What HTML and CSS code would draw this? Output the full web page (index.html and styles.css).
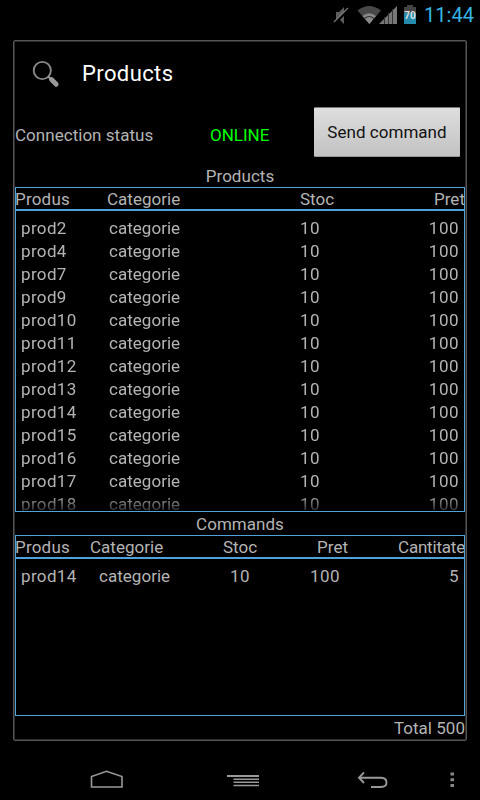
FILE: index.html
```
<!DOCTYPE html>
<html lang="en">
<head>
<meta charset="utf-8">
<title>Products</title>
<link rel="stylesheet" href="styles.css">
</head>
<body>
<header class="statusbar">
  <svg class="status-icons" width="90" height="30" viewBox="0 0 90 30">
    <path d="M6 12h3l5-5v17l-5-5H6z" fill="#5c5c5c"/>
    <path d="M4.500 23.500L18.500 9.500" stroke="#000" stroke-width="2.500"/>
    <path d="M4 22L18 8" stroke="#777" stroke-width="1.300"/>
    <path d="M27.500 10.500Q39 1.500 51 10.500L39.300 24z" fill="#484848"/>
    <path d="M32.500 16Q39 10.500 46 16L39.300 24z" fill="#888"/>
    <path d="M34.500 18.500Q39 14.500 44 18.500" fill="none" stroke="#333" stroke-width="1.2"/>
    <path d="M49 24L67 6V24z" fill="#777"/>
    <path d="M54.500 17v7M58.500 13v11M62.500 9v15" stroke="#333" stroke-width="1"/>
    <path d="M74 7h3V5h6v2h3v6H74z" fill="#444"/>
    <path d="M74 13h12v11H74z" fill="#258bad"/>
    <text x="80" y="19" text-anchor="middle" class="battery">70</text>
  </svg>
  <span class="clock">11:44</span>
</header>
<main class="panel">
  <div class="title">
    <svg width="30" height="30" viewBox="0 0 30 30">
      <circle cx="10.300" cy="11.500" r="8.600" fill="none" stroke="#888" stroke-width="1.900"/>
      <path d="M16.300 17.500l3 3" stroke="#999" stroke-width="2"/>
      <path d="M19.500 20.500l4.700 4.700" stroke="#999" stroke-width="4.800" stroke-linecap="round"/>
    </svg>
    <h1>Products</h1>
  </div>
  <div class="connection">
    <span class="label">Connection status</span>
    <span class="online">ONLINE</span>
    <button class="send">Send command</button>
  </div>
  <h2 class="caption">Products</h2>
  <section class="list products">
    <div class="row head"><span>Produs</span><span>Categorie</span><span>Stoc</span><span>Pret</span></div>
    <div class="body">
      <div class="row"><span>prod2</span><span>categorie</span><span>10</span><span>100</span></div>
      <div class="row"><span>prod4</span><span>categorie</span><span>10</span><span>100</span></div>
      <div class="row"><span>prod7</span><span>categorie</span><span>10</span><span>100</span></div>
      <div class="row"><span>prod9</span><span>categorie</span><span>10</span><span>100</span></div>
      <div class="row"><span>prod10</span><span>categorie</span><span>10</span><span>100</span></div>
      <div class="row"><span>prod11</span><span>categorie</span><span>10</span><span>100</span></div>
      <div class="row"><span>prod12</span><span>categorie</span><span>10</span><span>100</span></div>
      <div class="row"><span>prod13</span><span>categorie</span><span>10</span><span>100</span></div>
      <div class="row"><span>prod14</span><span>categorie</span><span>10</span><span>100</span></div>
      <div class="row"><span>prod15</span><span>categorie</span><span>10</span><span>100</span></div>
      <div class="row"><span>prod16</span><span>categorie</span><span>10</span><span>100</span></div>
      <div class="row"><span>prod17</span><span>categorie</span><span>10</span><span>100</span></div>
      <div class="row"><span>prod18</span><span>categorie</span><span>10</span><span>100</span></div>
    </div>
  </section>
  <h2 class="caption">Commands</h2>
  <section class="list commands">
    <div class="row head"><span>Produs</span><span>Categorie</span><span>Stoc</span><span>Pret</span><span>Cantitate</span></div>
    <div class="body">
      <div class="row"><span>prod14</span><span>categorie</span><span>10</span><span>100</span><span>5</span></div>
    </div>
  </section>
  <div class="total">Total 500</div>
</main>
<nav class="navbar">
  <svg width="480" height="44" viewBox="0 0 480 44" fill="none" stroke="#999">
    <path d="M91.500 31V20.500L106.500 15.300L122 20.500V31z" stroke-width="1.600"/>
    <path d="M227 20h32" stroke-width="2"/>
    <path d="M233.500 23.300H259M233.500 26.300H259M233.500 29.500H259" stroke-width="1.600"/>
    <path d="M364 16.500L359 21.700L364 27M359 21.700H381Q386.500 22 386.500 26.500Q386.500 31 381 31H371" stroke-width="1.900"/>
    <path d="M450.500 16.500h3.500v3h-3.500zM450.500 22.300h3.500v3h-3.500zM450.500 28.100h3.500v3h-3.500z" fill="#888" stroke="none"/>
  </svg>
</nav>
</body>
</html>
```
FILE: styles.css
```
* { box-sizing: border-box; }
body {
  margin: 0;
  width: 480px;
  height: 800px;
  overflow: hidden;
  display: flex;
  flex-direction: column;
  background: #000;
  color: #b4b4b4;
  font: 17px/23px Roboto, sans-serif;
  letter-spacing: 0.03px;
}
.statusbar {
  height: 40px;
  padding-right: 6px;
  display: flex;
  justify-content: flex-end;
  align-items: flex-start;
}
.status-icons { margin-right: 4px; }
.battery { font: bold 10px Roboto, sans-serif; letter-spacing: 0; fill: #ddd; }
.clock { width: 50px; font-size: 20px; line-height: 31px; color: #33b5e5; }
.panel {
  width: 454px;
  height: 701px;
  margin-left: 13px;
  padding: 0 1px;
  border: 1px solid #555;
  border-radius: 2px;
  box-shadow: inset 0 0 0 1px #2c2c2c;
}
.title {
  height: 66px;
  padding-left: 17px;
  display: flex;
  align-items: center;
  gap: 20px;
}
h1 { margin: -1px 0 0; font-size: 22px; font-weight: 400; letter-spacing: 0.4px; color: #fff; }
.connection {
  height: 57px;
  padding-right: 5px;
  display: flex;
  align-items: flex-start;
}
.label, .online { line-height: 57px; }
.label { width: 195px; }
.online { color: #0f0; letter-spacing: 0; flex: 1; }
.send {
  width: 146px;
  height: 50px;
  padding: 0;
  border: 0;
  border-top: 1px solid #777;
  border-bottom: 1px solid #999;
  border-radius: 1px;
  background: linear-gradient(#dedede, #c2c2c2);
  color: #111;
  font: inherit;
  letter-spacing: inherit;
}
.caption { margin: 0; height: 23px; font-size: 17px; font-weight: 400; line-height: 24px; text-align: center; }
.list { width: 450px; border: 1px solid #4fa3d8; overflow: hidden; }
.products { height: 325px; }
.commands { height: 181px; }
.row { display: grid; height: 23px; padding: 0 5px; }
.row span:last-child { text-align: right; }
.body span:first-child { letter-spacing: 0.35px; }
.body span:nth-child(n+3) { letter-spacing: 0.5px; }
.products .row { grid-template-columns: 88px 191px 60px 1fr; }
.commands .row { grid-template-columns: 78px 131px 80px 60px 1fr; }
.head { margin: 0 -1px; padding: 0; border-bottom: 2px solid #4fa3d8; line-height: 23px; }
.head span:first-child { letter-spacing: 0.2px; }
.products .head { grid-template-columns: 92px 193px 60px 1fr; }
.commands .head { grid-template-columns: 75px 133px 94px 60px 1fr; }
.commands .head span:last-child { letter-spacing: -0.2px; }
.body { padding-top: 6px; }
.products .body {
  height: 300px;
  overflow: hidden;
  -webkit-mask-image: linear-gradient(#000 284px, rgba(0, 0, 0, 0.25) 300px);
  mask-image: linear-gradient(#000 284px, rgba(0, 0, 0, 0.25) 300px);
}
.total { line-height: 24px; text-align: right; }
.navbar { margin-top: 15px; height: 44px; }
```
